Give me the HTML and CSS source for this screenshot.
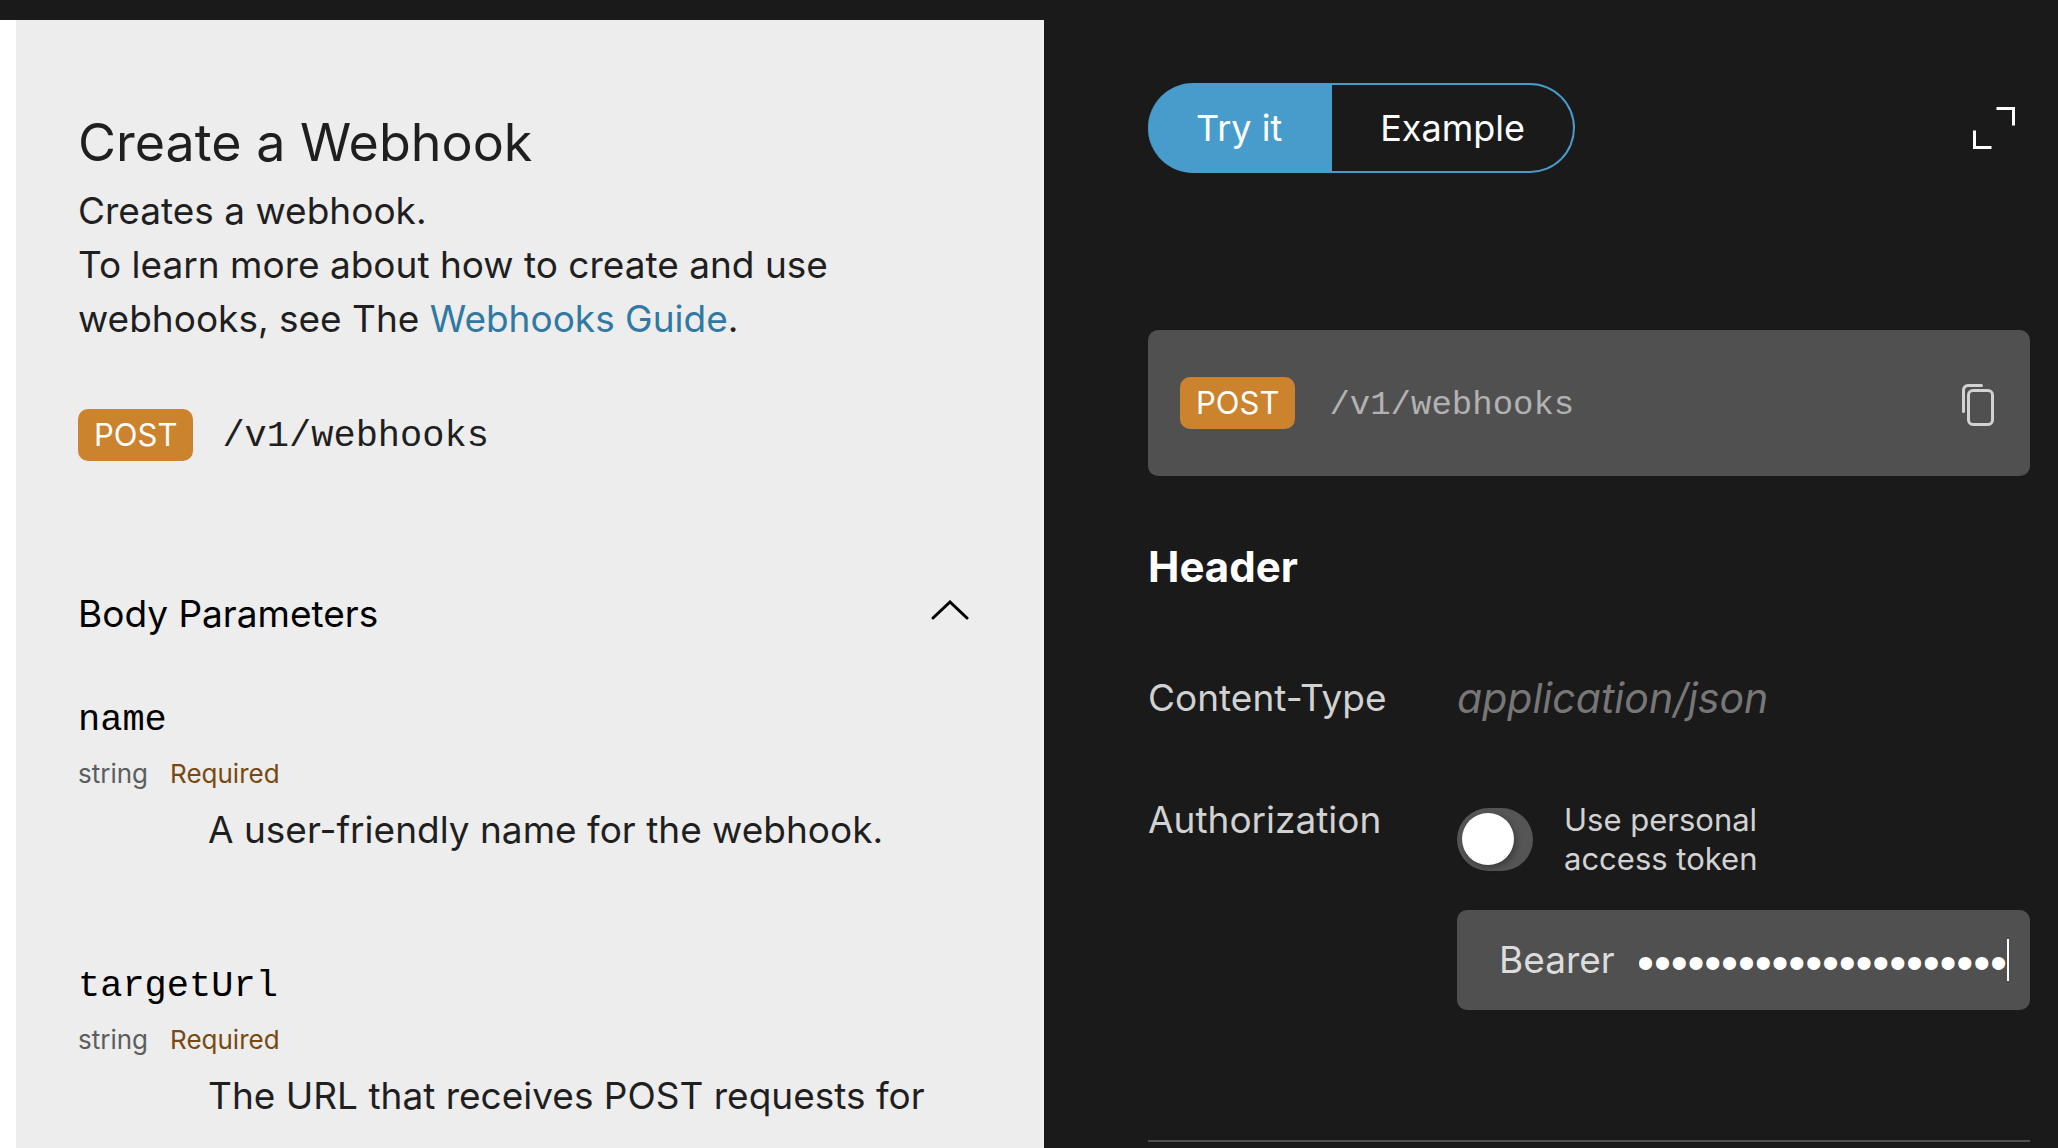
FILE: index.html
```html
<!DOCTYPE html>
<html lang="en">
<head>
<meta charset="utf-8">
<title>Create a Webhook</title>
<link rel="stylesheet" href="styles.css">
</head>
<body>
<div class="topbar"></div>
<div class="layout">
  <main class="docs">
    <h1 class="title">Create a Webhook</h1>
    <p class="text">Creates a webhook.<br>To learn more about how to create and use webhooks, see The <a class="link" href="#guide">Webhooks Guide</a>.</p>
    <div class="endpoint">
      <span class="method">POST</span>
      <code class="path">/v1/webhooks</code>
    </div>
    <section class="params">
      <h2 class="params-heading">
        <button class="params-toggle" type="button" aria-expanded="true">
          <span>Body Parameters</span>
          <svg class="chevron" viewBox="0 0 38 20" aria-hidden="true"><path d="M2 18 19 2 36 18"/></svg>
        </button>
      </h2>
      <dl class="param-list">
        <div class="param">
          <dt class="param-name">name</dt>
          <dd class="param-meta"><span class="param-type">string</span><span class="param-required">Required</span></dd>
          <dd class="param-text">A user-friendly name for the webhook.</dd>
        </div>
        <div class="param">
          <dt class="param-name">targetUrl</dt>
          <dd class="param-meta"><span class="param-type">string</span><span class="param-required">Required</span></dd>
          <dd class="param-text">The URL that receives POST requests for</dd>
        </div>
      </dl>
    </section>
  </main>

  <aside class="console">
    <div class="console-bar">
      <div class="tabs">
        <button class="tab tab-active" type="button">Try it</button>
        <button class="tab" type="button">Example</button>
      </div>
      <button class="icon-button" type="button" aria-label="Expand">
        <svg class="expand-icon" viewBox="0 0 42 42" aria-hidden="true"><path d="M23.500 1.500H40.500V18.500M1.500 23.500V40.500H18.500"/></svg>
      </button>
    </div>

    <div class="request">
      <div class="request-line">
        <span class="method">POST</span>
        <code class="request-path">/v1/webhooks</code>
      </div>
      <button class="icon-button copy-button" type="button" aria-label="Copy">
        <svg class="copy-icon" viewBox="0 0 32 42" aria-hidden="true"><path d="M1.500 27.500V6A4.500 4.500 0 0 1 6 1.500H19.500"/><rect x="6.500" y="6.500" width="24" height="34" rx="4.500"/></svg>
      </button>
    </div>

    <h2 class="section-title">Header</h2>
    <form class="fields">
      <label class="field-label" for="content-type">Content-Type</label>
      <input class="content-type" id="content-type" type="text" placeholder="application/json">
      <label class="field-label" for="token">Authorization</label>
      <div class="auth">
        <label class="switch-row">
          <input class="switch" type="checkbox" role="switch">
          <span class="switch-label">Use personal access token</span>
        </label>
        <div class="token-box">
          <span class="token-prefix">Bearer</span>
          <input class="token" id="token" type="password" value="abcdefghijklmnopqrstuvwxyz0123456789abcdef" autocomplete="off">
        </div>
      </div>
    </form>
    <hr class="divider">
  </aside>
</div>
<script src="app.js"></script>
</body>
</html>
```
FILE: styles.css
```css
* {
  box-sizing: border-box;
}

body {
  margin: 0;
  min-height: 100vh;
  display: flex;
  flex-direction: column;
  background: #fff;
  color: #1f1f1f;
  font: 37px/54px Inter, "Liberation Sans", sans-serif;
}

h1, h2, p, dl, dd {
  margin: 0;
  font-size: inherit;
  font-weight: 400;
}

button, input {
  font: inherit;
  color: inherit;
  background: none;
  border: 0;
  padding: 0;
  margin: 0;
}

code {
  font: 37px/40px "Courier New", "Liberation Mono", monospace;
}

svg {
  display: block;
  fill: none;
  stroke: currentColor;
  stroke-width: 3px;
  stroke-linecap: round;
}

.topbar {
  height: 20px;
  background: #1a1a1a;
}

.layout {
  flex: 1;
  display: grid;
  grid-template-columns: minmax(0, 1044fr) minmax(0, 1014fr);
}

/* Documentation column */

.docs {
  margin-left: 16px;
  padding: 93px 62px 0;
  background: #ededed;
}

.title {
  font-size: 52px;
  line-height: 60px;
  margin-bottom: 11px;
}

.text {
  max-width: 800px;
}

.link {
  color: #2f79a3;
  text-decoration: none;
}

.endpoint {
  display: flex;
  align-items: baseline;
  gap: 29px;
  margin-top: 63px;
}

.method {
  padding: 0 16px;
  border-radius: 10px;
  background: #cc832e;
  color: #fff;
  font-size: 31px;
  line-height: 52px;
}

.params {
  margin-top: 126px;
}

.params-toggle {
  width: 100%;
  display: flex;
  align-items: center;
  justify-content: space-between;
  color: #000;
  text-align: left;
}

.chevron {
  width: 38px;
  height: 20px;
  margin-right: 13px;
  margin-bottom: 8px;
}

.param-list {
  display: grid;
  gap: 102px;
  margin-top: 52px;
}

.param-name {
  color: #000;
  font-family: "Courier New", "Liberation Mono", monospace;
}

.param-meta {
  display: flex;
  gap: 22px;
  font-size: 26px;
}

.param-type {
  color: #5b5e60;
}

.param-required {
  color: #784a12;
}

.param-text {
  padding: 2px 0 0 130px;
}

/* Request console */

.console {
  padding: 63px 28px 0 104px;
  background: #1a1a1a;
  color: #d2d2d2;
}

.console-bar {
  display: flex;
  align-items: center;
  justify-content: space-between;
  padding-right: 15px;
}

.tabs {
  display: flex;
  height: 90px;
}

.tab {
  padding: 0 48px;
  border: 2px solid #489ccc;
  border-left: 0;
  border-radius: 0 45px 45px 0;
  color: #fff;
  font-size: 36px;
}

.tab-active {
  border-radius: 45px 0 0 45px;
  background: #489ccc;
}

.icon-button {
  color: #fff;
}

.expand-icon {
  width: 42px;
  height: 42px;
  stroke-linecap: butt;
}

.request {
  display: flex;
  align-items: center;
  justify-content: space-between;
  height: 146px;
  margin-top: 157px;
  padding: 0 36px 0 32px;
  border-radius: 10px;
  background: #505050;
}

.request-line {
  display: flex;
  align-items: baseline;
  gap: 34px;
}

.request-path {
  color: #b2b2b2;
  font-size: 34px;
}

.copy-button {
  margin-top: 4px;
  color: #d2d2d2;
}

.copy-icon {
  width: 32px;
  height: 42px;
}

.section-title {
  margin-top: 64px;
  color: #fff;
  font-size: 42px;
  font-weight: 700;
}

.fields {
  display: grid;
  grid-template-columns: 309px minmax(0, 1fr);
  row-gap: 68px;
  margin-top: 77px;
}

.content-type {
  width: 100%;
  height: 54px;
  font-size: 41px;
  font-style: italic;
}

.content-type::placeholder {
  color: #777;
}

.auth {
  padding-top: 7px;
}

.switch-row {
  display: flex;
  align-items: center;
  gap: 31px;
}

.switch {
  appearance: none;
  flex: none;
  width: 76px;
  height: 63px;
  padding: 5px;
  border-radius: 32px;
  background: #555;
}

.switch::before {
  content: "";
  display: block;
  width: 52px;
  height: 52px;
  border-radius: 50%;
  background: #fff;
  box-shadow: 2px 3px 6px rgba(0, 0, 0, 0.3);
}

.switch-label {
  max-width: 220px;
  font-size: 31px;
  line-height: 39px;
}

.token-box {
  display: flex;
  align-items: center;
  gap: 24px;
  height: 100px;
  margin-top: 32px;
  padding: 0 21px 0 42px;
  border-radius: 10px;
  background: #505050;
}

.token-prefix {
  color: #dcdcdc;
}

.token {
  flex: 1;
  min-width: 0;
  height: 42px;
  padding-top: 4px;
  border-right: 2px solid #fff;
  color: #fff;
  font-family: "Liberation Sans", sans-serif;
  font-size: 48px;
  font-style: italic;
  line-height: 42px;
}

.divider {
  height: 2px;
  margin: 130px 0 0;
  border: 0;
  background: #505050;
}
```
FILE: app.js
```js
// Keep the end of a long token in view.
const token = document.getElementById("token");
token.scrollLeft = token.scrollWidth;
```
